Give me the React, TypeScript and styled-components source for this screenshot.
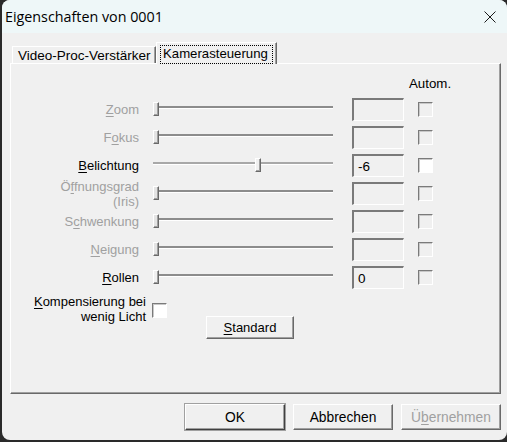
import styled, { createGlobalStyle } from "styled-components";

const GlobalStyle = createGlobalStyle`
  html, body {
    margin: 0;
    padding: 0;
    background: #2a2a2a;
  }
  body {
    width: 507px;
    height: 442px;
    overflow: hidden;
    font-family: "Liberation Sans", Arial, sans-serif;
    font-size: 13px;
    color: #000;
  }
`;

const Dialog = styled.div`
  margin-left: 2px;
  width: 505px;
  height: 440px;
  background: #f0f0f0;
  border-radius: 8px;
  overflow: hidden;
  display: flex;
  flex-direction: column;
`;

const TitleBar = styled.div`
  height: 33px;
  flex: none;
  display: flex;
  align-items: center;
  justify-content: space-between;
  padding: 0 11px 0 3px;
  background: #eef7f8;
  font-family: "Open Sans", "Noto Sans", sans-serif;
  font-size: 14.3px;
  color: #000;
`;

const CloseButton = styled.div`
  width: 12px;
  height: 12px;
  display: flex;
`;

const Body = styled.div`
  flex: 1;
  display: flex;
  flex-direction: column;
  padding: 9px 6px 0 8px;
`;

const TabStrip = styled.div`
  height: 21px;
  display: flex;
  align-items: flex-end;
  padding-left: 2px;
  position: relative;
  z-index: 1;
`;

const Tab = styled.div<{ $active?: boolean }>`
  box-sizing: border-box;
  height: ${(p) => (p.$active ? "22px" : "17px")};
  margin-bottom: ${(p) => (p.$active ? "-1px" : "0")};
  padding: ${(p) => (p.$active ? "2px 3px 0 3px" : "0 0 0 5px")};
  width: ${(p) => (p.$active ? "121px" : "144px")};
  background: #f0f0f0;
  border-top: 1px solid #fff;
  border-left: 1px solid #fff;
  border-right: 1px solid #696969;
  box-shadow: inset -1px 0 #a0a0a0;
  display: flex;
  align-items: ${(p) => (p.$active ? "flex-start" : "center")};
  font-size: ${(p) => (p.$active ? "13.2px" : "13.5px")};
  white-space: nowrap;
`;

const FocusRing = styled.span`
  display: block;
  width: 100%;
  box-sizing: border-box;
  padding: 1px 2px 3px 3px;
  outline: 1px dotted #000;
  outline-offset: -1px;
`;

const Panel = styled.div`
  box-sizing: border-box;
  width: 491px;
  height: 331px;
  border-top: 1px solid #fff;
  border-left: 1px solid #fff;
  border-right: 1px solid #696969;
  border-bottom: 1px solid #696969;
  box-shadow: inset -1px -1px #a0a0a0;
  display: flex;
  flex-direction: column;
  padding-top: 12px;
`;

const AutoHeader = styled.div`
  line-height: 16px;
  padding-left: 398px;
  font-size: 13.3px;
`;

const Rows = styled.div`
  margin-top: 6px;
  display: flex;
  flex-direction: column;
  gap: 5px;
`;

const Row = styled.div`
  height: 23px;
  display: flex;
  align-items: center;
`;

const Label = styled.div<{ $disabled?: boolean }>`
  width: 128px;
  flex: none;
  text-align: right;
  line-height: 15px;
  color: ${(p) => (p.$disabled ? "#a0a0a0" : "#000")};
`;

const Accel = styled.span`
  text-decoration: underline;
  text-underline-offset: 2px;
`;

const Trackbar = styled.div`
  position: relative;
  width: 180px;
  height: 23px;
  margin-left: 14px;
  flex: none;
`;

const Track = styled.div<{ $light?: boolean }>`
  margin-top: 8px;
  height: 2px;
  background: ${(p) => (p.$light ? "#a8a8a8" : "#8c8c8c")};
  border-bottom: 1px solid #fff;
`;

const Thumb = styled.div<{ $disabled?: boolean }>`
  position: absolute;
  top: 4px;
  box-sizing: border-box;
  width: 6px;
  height: 14px;
  background: ${(p) => (p.$disabled ? "#e4e4e4" : "#f0f0f0")};
  border-top: 1px solid #fff;
  border-left: 1px solid #fff;
  border-right: 1px solid #696969;
  border-bottom: 1px solid #696969;
  box-shadow: inset -1px -1px #a0a0a0;
`;

const EditBox = styled.div`
  box-sizing: border-box;
  width: 52px;
  height: 23px;
  margin-left: 19px;
  flex: none;
  padding-left: 4px;
  display: flex;
  align-items: center;
  background: #f0f0f0;
  border-top: 2px solid #7a7a7a;
  border-left: 2px solid #7a7a7a;
  border-right: 1px solid #fff;
  border-bottom: 1px solid #fff;
  font-size: 13.5px;
`;

const CheckBox = styled.div<{ $white?: boolean }>`
  box-sizing: border-box;
  width: 15px;
  height: 15px;
  flex: none;
  background: ${(p) => (p.$white ? "#fff" : "#f0f0f0")};
  border-top: 1px solid #7a7a7a;
  border-left: 1px solid #7a7a7a;
  border-right: 1px solid #fff;
  border-bottom: 1px solid #fff;
  box-shadow: inset 1px 1px #c8c8c8;
`;

const RowCheck = styled(CheckBox)`
  margin-left: 14px;
`;

const LowLightRow = styled.div`
  margin-top: 5px;
  display: flex;
  align-items: flex-start;
`;

const LowLightLabel = styled.div`
  width: 135px;
  flex: none;
  text-align: right;
  line-height: 15px;
`;

const LowLightCheck = styled(CheckBox)`
  margin: 9px 0 0 6px;
`;

const Button = styled.div<{ $disabled?: boolean; $default?: boolean }>`
  box-sizing: border-box;
  width: ${(p) => (p.$default !== undefined ? "100px" : "88px")};
  height: ${(p) => (p.$default !== undefined ? "26px" : "23px")};
  display: flex;
  align-items: center;
  justify-content: center;
  background: #f0f0f0;
  border-top: 1px solid #fff;
  border-left: 1px solid #fff;
  border-right: 1px solid ${(p) => (p.$default ? "#404040" : "#696969")};
  border-bottom: 1px solid ${(p) => (p.$default ? "#404040" : "#696969")};
  box-shadow: inset -1px -1px #a0a0a0, 0 0 0 ${(p) => (p.$default ? "1px" : "0")} #a0a0a0;
  color: ${(p) => (p.$disabled ? "#a0a0a0" : "#000")};
  font-size: 13.8px;
`;

const StandardButton = styled(Button)`
  margin: 22px 0 0 39px;
  font-size: 13px;
`;

const ButtonBar = styled.div`
  display: flex;
  justify-content: flex-end;
  gap: 8px;
  padding: 10px 0 0 0;
`;

type Control = {
  pre: string;
  accel: string;
  post: string;
  second?: string;
  enabled: boolean;
  value: string;
  thumb: number;
  whiteCheck?: boolean;
  lightTrack?: boolean;
};

const controls: Control[] = [
  { pre: "", accel: "Z", post: "oom", enabled: false, value: "", thumb: 0 },
  { pre: "F", accel: "o", post: "kus", enabled: false, value: "", thumb: 0 },
  { pre: "", accel: "B", post: "elichtung", enabled: true, value: "-6", thumb: 102, whiteCheck: true, lightTrack: true },
  { pre: "Ö", accel: "f", post: "fnungsgrad", second: "(Iris)", enabled: false, value: "", thumb: 0 },
  { pre: "S", accel: "c", post: "hwenkung", enabled: false, value: "", thumb: 0 },
  { pre: "", accel: "N", post: "eigung", enabled: false, value: "", thumb: 0 },
  { pre: "", accel: "R", post: "ollen", enabled: true, value: "0", thumb: 0 },
];

function CloseIcon() {
  return (
    <svg width="12" height="12" viewBox="0 0 12 12">
      <path d="M0.5 0.5 L11.5 11.5 M11.5 0.5 L0.5 11.5" stroke="#1a1a1a" strokeWidth="1" fill="none" />
    </svg>
  );
}

export default function App() {
  return (
    <>
      <GlobalStyle />
      <Dialog>
        <TitleBar>
          <span>Eigenschaften von 0001</span>
          <CloseButton>
            <CloseIcon />
          </CloseButton>
        </TitleBar>
        <Body>
          <TabStrip>
            <Tab>Video-Proc-Verstärker</Tab>
            <Tab $active>
              <FocusRing>Kamerasteuerung</FocusRing>
            </Tab>
          </TabStrip>
          <Panel>
            <AutoHeader>Autom.</AutoHeader>
            <Rows>
              {controls.map((c) => (
                <Row key={c.pre + c.accel + c.post}>
                  <Label $disabled={!c.enabled}>
                    {c.pre}
                    <Accel>{c.accel}</Accel>
                    {c.post}
                    {c.second && (
                      <>
                        <br />
                        {c.second}
                      </>
                    )}
                  </Label>
                  <Trackbar>
                    <Track $light={c.lightTrack} />
                    <Thumb $disabled={!c.enabled} style={{ left: c.thumb }} />
                  </Trackbar>
                  <EditBox>{c.value}</EditBox>
                  <RowCheck $white={c.whiteCheck} />
                </Row>
              ))}
            </Rows>
            <LowLightRow>
              <LowLightLabel>
                <Accel>K</Accel>ompensierung bei
                <br />
                wenig Licht
              </LowLightLabel>
              <LowLightCheck $white />
              <StandardButton>
                <Accel>S</Accel>tandard
              </StandardButton>
            </LowLightRow>
          </Panel>
          <ButtonBar>
            <Button $default>OK</Button>
            <Button $default={false}>Abbrechen</Button>
            <Button $default={false} $disabled>
              Ü<Accel>b</Accel>ernehmen
            </Button>
          </ButtonBar>
        </Body>
      </Dialog>
    </>
  );
}
